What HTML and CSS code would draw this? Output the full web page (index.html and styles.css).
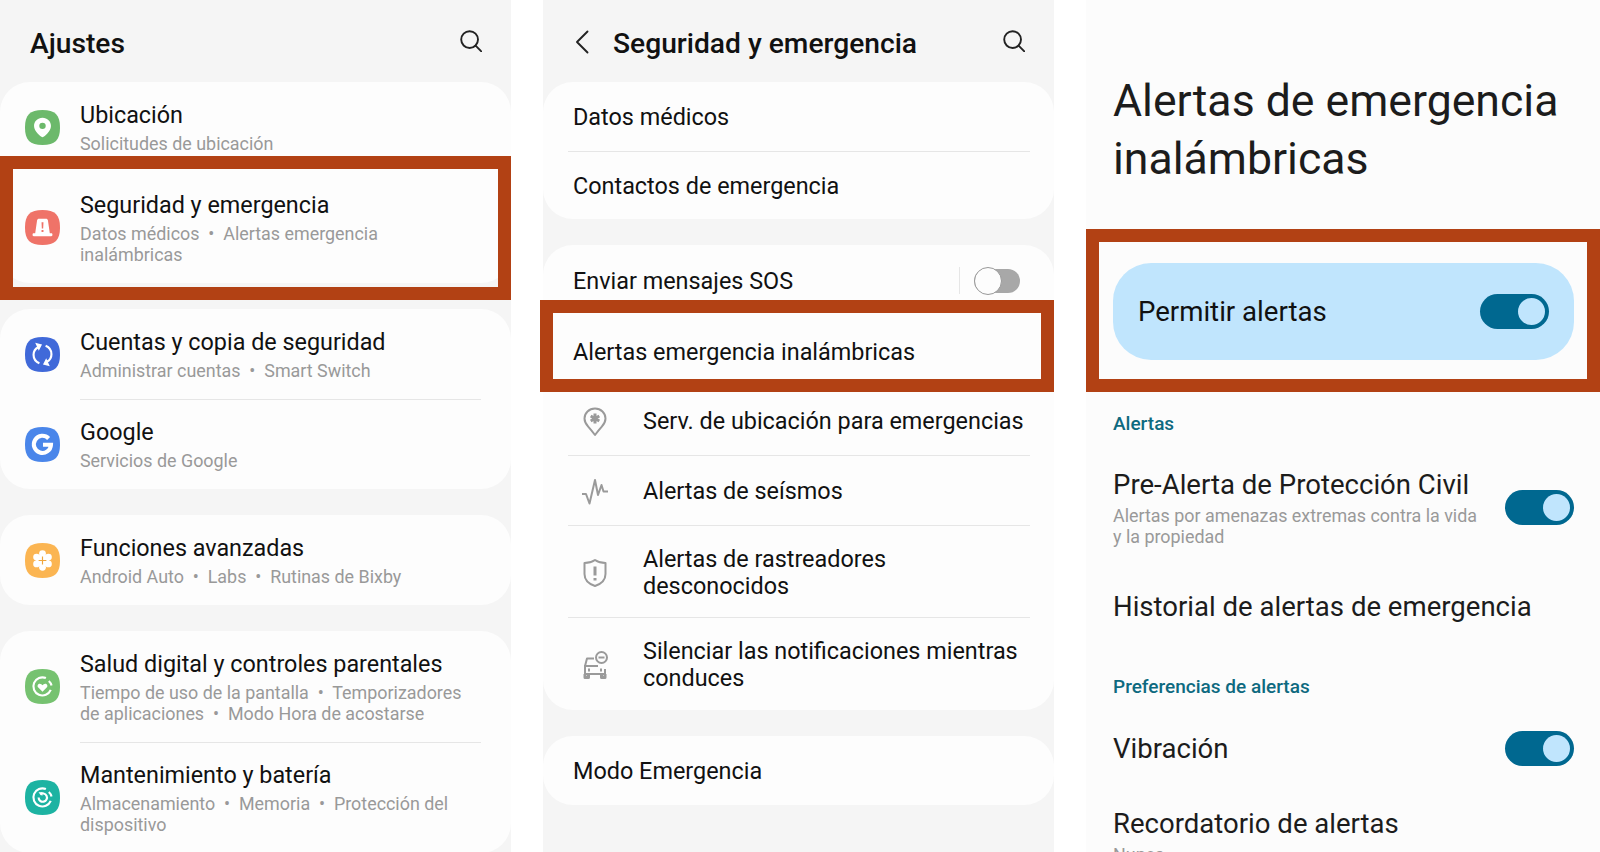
FILE: index.html
```html
<!DOCTYPE html>
<html lang="es">
<head>
    <meta charset="UTF-8">
    <meta name="viewport" content="width=device-width, initial-scale=1.0">
    <title>Alertas de emergencia</title>
    <link rel="stylesheet" href="styles.css">
</head>
<body>
<svg class="defs" width="0" height="0">
    <symbol id="search" viewBox="0 0 22 22">
        <circle cx="9.6" cy="9.6" r="8.4"/>
        <path d="M15.6 15.6 21.300 21.300"/>
    </symbol>
</svg>

<div class="screens">

    <!-- Ajustes -->
    <section class="panel">
        <header class="bar">
            <h2 class="bar-title">Ajustes</h2>
            <svg class="search" width="22" height="22"><use href="#search"/></svg>
        </header>

        <div class="card">
            <div class="row">
                <svg class="app-icon" viewBox="0 0 36 36">
                    <path fill="#6cb96b" d="M18 0C31 0 36 5 36 18S31 36 18 36 0 31 0 18 5 0 18 0Z"/>
                    <path fill="#fff" d="M18 8c-5 0-8.700 3.700-8.700 8.500 0 2.800 1.700 5.600 3.700 7.700 1.700 1.800 3.700 3.800 5 3.800s3.300-2 5-3.800c2-2.100 3.700-4.900 3.700-7.700C26.700 11.700 23 8 18 8Z"/>
                    <circle fill="#6cb96b" cx="18" cy="16.300" r="3.300"/>
                </svg>
                <div class="row-body">
                    <div class="name">Ubicación</div>
                    <div class="sub">Solicitudes de ubicación</div>
                </div>
            </div>
            <div class="row row-flat">
                <svg class="app-icon" viewBox="0 0 36 36">
                    <path fill="#ef7368" d="M18 0C31 0 36 5 36 18S31 36 18 36 0 31 0 18 5 0 18 0Z"/>
                    <path fill="#fff" d="M14.500 9h7c1.200 0 1.900.7 2.100 1.800L25.500 24H27c.8 0 1.200.5 1.200 1.200v.6c0 .7-.4 1.200-1.200 1.200H9c-.8 0-1.200-.5-1.200-1.200v-.6C7.800 24.500 8.200 24 9 24h1.500l1.900-13.200C12.600 9.700 13.300 9 14.500 9Z"/>
                    <path fill="#ef7368" d="M17 12.500h2l-.3 6.500h-1.400ZM17 20.500h2v2h-2Z"/>
                </svg>
                <div class="row-body">
                    <div class="name">Seguridad y emergencia</div>
                    <div class="sub">Datos médicos &nbsp;•&nbsp; Alertas emergencia inalámbricas</div>
                </div>
            </div>
        </div>

        <div class="card">
            <div class="row">
                <svg class="app-icon" viewBox="0 0 36 36">
                    <path fill="#4069d9" d="M18 0C31 0 36 5 36 18S31 36 18 36 0 31 0 18 5 0 18 0Z"/>
                    <path class="glyph" d="M14.800 27C11.300 25.600 8.800 22.200 8.800 18.300c0-3.400 1.900-6.300 4.700-7.800M21.200 9c3.500 1.400 6 4.800 6 8.700 0 3.400-1.900 6.300-4.700 7.800"/>
                    <path fill="#fff" d="M10.500 6 17.500 7.800l-3.300 6.400ZM25.500 30 18.500 28.200l3.300-6.400Z"/>
                </svg>
                <div class="row-body">
                    <div class="name">Cuentas y copia de seguridad</div>
                    <div class="sub">Administrar cuentas &nbsp;•&nbsp; Smart Switch</div>
                </div>
            </div>
            <div class="row">
                <svg class="app-icon" viewBox="0 0 36 36">
                    <path fill="#4a86ea" d="M18 0C31 0 36 5 36 18S31 36 18 36 0 31 0 18 5 0 18 0Z"/>
                    <path class="glyph glyph-thick" d="M24.300 11.800A8.800 8.800 0 1 0 26.700 18.300H18.500"/>
                </svg>
                <div class="row-body">
                    <div class="name">Google</div>
                    <div class="sub">Servicios de Google</div>
                </div>
            </div>
        </div>

        <div class="card">
            <div class="row">
                <svg class="app-icon" viewBox="0 0 36 36">
                    <path fill="#fbb552" d="M18 0C31 0 36 5 36 18S31 36 18 36 0 31 0 18 5 0 18 0Z"/>
                    <g fill="#fff">
                        <circle cx="18" cy="11" r="3.500"/>
                        <circle cx="18" cy="25" r="3.500"/>
                        <circle cx="11.900" cy="14.500" r="3.500"/>
                        <circle cx="24.100" cy="14.500" r="3.500"/>
                        <circle cx="11.900" cy="21.500" r="3.500"/>
                        <circle cx="24.100" cy="21.500" r="3.500"/>
                        <circle cx="18" cy="18" r="6.500"/>
                    </g>
                    <path fill="#f0a63c" d="M17.400 14h1.200v3.400H22v1.200h-3.400V22h-1.200v-3.400H14v-1.200h3.400Z"/>
                </svg>
                <div class="row-body">
                    <div class="name">Funciones avanzadas</div>
                    <div class="sub">Android Auto &nbsp;•&nbsp; Labs &nbsp;•&nbsp; Rutinas de Bixby</div>
                </div>
            </div>
        </div>

        <div class="card">
            <div class="row">
                <svg class="app-icon" viewBox="0 0 36 36">
                    <path fill="#76c270" d="M18 0C31 0 36 5 36 18S31 36 18 36 0 31 0 18 5 0 18 0Z"/>
                    <path class="glyph" d="M26.500 21.500A9.300 9.300 0 1 1 21.500 9.300M24.500 12.300A9.300 9.300 0 0 1 27.300 17"/>
                    <path fill="#fff" d="M18 23.300l-4.300-4.200c-2.200-2.300.9-5.400 3.100-3.400L18 16.800l1.200-1.100c2.200-2 5.300 1.100 3.100 3.400Z"/>
                </svg>
                <div class="row-body">
                    <div class="name">Salud digital y controles parentales</div>
                    <div class="sub">Tiempo de uso de la pantalla &nbsp;•&nbsp; Temporizadores de aplicaciones &nbsp;•&nbsp; Modo Hora de acostarse</div>
                </div>
            </div>
            <div class="row">
                <svg class="app-icon" viewBox="0 0 36 36">
                    <path fill="#1db3a2" d="M18 0C31 0 36 5 36 18S31 36 18 36 0 31 0 18 5 0 18 0Z"/>
                    <path class="glyph" d="M26.500 21.500A9.300 9.300 0 1 1 21.500 9.300M24.500 12.300A9.300 9.300 0 0 1 27.300 17"/>
                    <path class="glyph" d="M14 18a4.300 4.300 0 1 0 1.500-3.200"/>
                    <path fill="#fff" d="M13.800 12.500h4v4Z"/>
                </svg>
                <div class="row-body">
                    <div class="name">Mantenimiento y batería</div>
                    <div class="sub">Almacenamiento &nbsp;•&nbsp; Memoria &nbsp;•&nbsp; Protección del dispositivo</div>
                </div>
            </div>
        </div>

        <div class="mark mark-settings"></div>
    </section>

    <!-- Seguridad y emergencia -->
    <section class="panel">
        <header class="bar">
            <svg class="back" width="14" height="24" viewBox="0 0 14 24"><path d="M12.500 1.500 2 12l10.500 10.500"/></svg>
            <h2 class="bar-title">Seguridad y emergencia</h2>
            <svg class="search" width="22" height="22"><use href="#search"/></svg>
        </header>

        <div class="card">
            <div class="item"><div class="item-body item-h69">Datos médicos</div></div>
            <div class="item"><div class="item-body item-h68">Contactos de emergencia</div></div>
        </div>

        <div class="card">
            <div class="item item-plain">
                <div class="item-body item-h71 item-sos">
                    <span>Enviar mensajes SOS</span>
                    <span class="switch-wrap">
                        <span class="switch-off"><span class="knob-off"></span></span>
                    </span>
                </div>
            </div>
            <div class="item item-plain"><div class="item-body item-h70">Alertas emergencia inalámbricas</div></div>
            <div class="item item-plain">
                <div class="item-body item-h69">
                    <svg class="line-icon" viewBox="0 0 26 30">
                        <path d="M13 1.500C7 1.500 2.500 6 2.500 11.500c0 3 1.600 5.800 3.700 8.200 2 2.300 4.500 5.300 6.800 8.300 2.300-3 4.800-6 6.800-8.300 2.100-2.400 3.700-5.200 3.700-8.200C23.500 6 19 1.500 13 1.500Z"/>
                        <path class="line-thick" d="M13 6.500v10M8.700 9l8.600 5M17.300 9l-8.600 5"/>
                    </svg>
                    <span>Serv. de ubicación para emergencias</span>
                </div>
            </div>
            <div class="item">
                <div class="item-body item-h70">
                    <svg class="line-icon" viewBox="0 0 26 30">
                        <path d="M0 17h4l3.500 9.500L13 3l3 15 3.500-10 2 6.500H26"/>
                    </svg>
                    <span>Alertas de seísmos</span>
                </div>
            </div>
            <div class="item">
                <div class="item-body item-h92">
                    <svg class="line-icon" viewBox="0 0 26 30">
                        <path d="M13 2c3 2 7 3 10.500 3v11c0 6-4.500 10-10.500 12C7 26 2.500 22 2.500 16V5C6 5 10 4 13 2Z"/>
                        <path class="line-thick" d="M13 8.500v9M13 20v2.500"/>
                    </svg>
                    <span>Alertas de rastreadores<br>desconocidos</span>
                </div>
            </div>
            <div class="item">
                <div class="item-body item-h93">
                    <svg class="line-icon" viewBox="0 0 26 30">
                        <path d="M12 8.500H5L3 16v8h20v-5M2 16h14"/>
                        <path class="line-thick" d="M3 24v3.500h3.500V24M19.500 24v3.500H23V24"/>
                        <circle cx="19.500" cy="7.500" r="5.500"/>
                        <path d="M16.500 7.500h6"/>
                        <path class="line-thick" d="M6 20h2M18 20h2"/>
                    </svg>
                    <span>Silenciar las notificaciones mientras<br>conduces</span>
                </div>
            </div>
        </div>

        <div class="card">
            <div class="item"><div class="item-body item-h69">Modo Emergencia</div></div>
        </div>

        <div class="mark mark-security"></div>
    </section>

    <!-- Alertas de emergencia -->
    <section class="panel panel-alerts">
        <h1 class="big-title">Alertas de emergencia inalámbricas</h1>

        <div class="pill">
            <span>Permitir alertas</span>
            <span class="switch"><span class="knob"></span></span>
        </div>

        <h3 class="group">Alertas</h3>

        <div class="setting setting-first">
            <div class="setting-text">
                <div class="setting-name">Pre-Alerta de Protección Civil</div>
                <div class="sub">Alertas por amenazas extremas contra la vida y la propiedad</div>
            </div>
            <span class="switch"><span class="knob"></span></span>
        </div>

        <div class="setting setting-next">
            <div class="setting-name">Historial de alertas de emergencia</div>
        </div>

        <h3 class="group group-prefs">Preferencias de alertas</h3>

        <div class="setting setting-first">
            <div class="setting-name">Vibración</div>
            <span class="switch"><span class="knob"></span></span>
        </div>

        <div class="setting setting-last">
            <div class="setting-text">
                <div class="setting-name">Recordatorio de alertas</div>
                <div class="sub">Nunca</div>
            </div>
        </div>

        <div class="mark mark-alerts"></div>
    </section>

</div>
</body>
</html>
```

FILE: styles.css
```css
html, body {
    margin: 0;
    height: 852px;
    overflow: hidden;
    background: #fff;
}
body {
    font-family: Roboto, "Liberation Sans", sans-serif;
    color: #111;
}
.defs {
    display: block;
    height: 0;
}
.screens {
    display: flex;
    gap: 32px;
    height: 852px;
}
.panel {
    position: relative;
    width: 511px;
    flex: none;
    height: 852px;
    background: #f5f5f5;
}
.panel-alerts {
    width: 514px;
    background: #fcfcfc;
    padding: 0 26px 0 27px;
    box-sizing: border-box;
}

/* top bar */
.bar {
    display: flex;
    align-items: center;
    height: 82px;
    padding: 4px 29px 0 30px;
    box-sizing: border-box;
}
.bar-title {
    flex: 1;
    margin: 0;
    font-size: 28.2px;
    font-weight: 500;
}
.search {
    fill: none;
    stroke: #222;
    stroke-width: 1.9;
    stroke-linecap: round;
    margin-top: -4px;
}
.back {
    fill: none;
    stroke: #222;
    stroke-width: 1.9;
    stroke-linecap: round;
    stroke-linejoin: round;
    margin: -3px 24px 0 2px;
}

/* cards */
.card {
    background: #fdfdfd;
    border-radius: 30px;
    margin-bottom: 26px;
}
.row {
    display: flex;
    align-items: center;
    padding-left: 25px;
}
.app-icon {
    width: 35px;
    height: 35px;
    flex: none;
    margin-right: 20px;
}
.glyph {
    fill: none;
    stroke: #fff;
    stroke-width: 2.2;
}
.glyph-thick {
    stroke-width: 4.2;
}
.row-body {
    flex: 1;
    margin-right: 30px;
    padding: 19px 0 18px;
}
.row + .row .row-body {
    border-top: 1px solid #e6e6e6;
    padding-top: 18px;
}
.row-flat + .row .row-body,
.row + .row-flat .row-body {
    border-top-color: transparent;
}
.name {
    font-size: 23.35px;
    line-height: 29px;
}
.sub {
    margin-top: 3px;
    font-size: 17.9px;
    line-height: 21px;
    color: #999;
}

/* list in the middle screen */
.item {
    margin: 0 24px 0 25px;
}
.item + .item .item-body {
    border-top: 1px solid #e6e6e6;
}
.item-body {
    display: flex;
    align-items: center;
    box-sizing: border-box;
    padding: 2px 0 0 5px;
    font-size: 23.4px;
    line-height: 27px;
}
.item-plain + .item-plain .item-body {
    border-top: none;
}
.item-h68 { height: 68px; }
.item-h69 { height: 69px; }
.item-h70 { height: 70px; }
.item-h71 { height: 71px; }
.item-h92 { height: 92px; }
.item-h93 { height: 93px; }
.item-sos {
    justify-content: space-between;
}
.switch-wrap {
    display: flex;
    align-items: center;
    height: 27px;
    margin-top: -2px;
    padding-left: 14px;
    margin-right: 10px;
    border-left: 1px solid #e6e6e6;
}
.switch-off {
    display: flex;
    align-items: center;
    width: 46px;
    height: 24px;
    border-radius: 12px;
    background: #a8a8a8;
}
.knob-off {
    width: 26px;
    height: 26px;
    border: 1px solid #999;
    border-radius: 50%;
    background: #fdfdfd;
}
.line-icon {
    width: 26px;
    height: 30px;
    flex: none;
    margin: 0 35px 0 9px;
    fill: none;
    stroke: #9a9a9a;
    stroke-width: 2;
    stroke-linejoin: round;
}
.line-thick {
    stroke-width: 3;
}

/* alerts screen */
.big-title {
    margin: 72px 0 0;
    font-size: 44.6px;
    font-weight: 400;
    line-height: 58px;
    color: #1c1c1c;
}
.pill {
    display: flex;
    align-items: center;
    justify-content: space-between;
    height: 97px;
    margin-top: 75px;
    padding: 0 25px;
    border-radius: 38px;
    background: #c0e5fd;
    font-size: 27.6px;
}
.switch {
    display: flex;
    align-items: center;
    justify-content: flex-end;
    width: 69px;
    height: 35px;
    flex: none;
    padding-right: 4px;
    box-sizing: border-box;
    border-radius: 18px;
    background: #006890;
}
.knob {
    width: 27px;
    height: 27px;
    border-radius: 50%;
    background: #c0e5fd;
}
.group {
    margin: 52px 0 0;
    font-size: 19px;
    font-weight: 500;
    line-height: 24px;
    color: #0e6a80;
}
.group-prefs {
    margin-top: 51px;
}
.setting {
    display: flex;
    align-items: center;
    justify-content: space-between;
}
.setting-first {
    margin-top: 32px;
}
.setting-next {
    margin-top: 43px;
}
.setting-last {
    margin-top: 41px;
}
.setting-text {
    width: 372px;
}
.setting-name {
    font-size: 27.55px;
    line-height: 34px;
    white-space: nowrap;
    color: #1c1c1c;
}

/* red marks drawn over the screenshots */
.mark {
    position: absolute;
    box-sizing: border-box;
    border: 13px solid #b24114;
}
.mark-settings {
    left: 0;
    top: 156px;
    width: 511px;
    height: 144px;
}
.mark-security {
    left: -3px;
    top: 300px;
    width: 514px;
    height: 92px;
}
.mark-alerts {
    left: 0;
    top: 229px;
    width: 514px;
    height: 163px;
}
```
